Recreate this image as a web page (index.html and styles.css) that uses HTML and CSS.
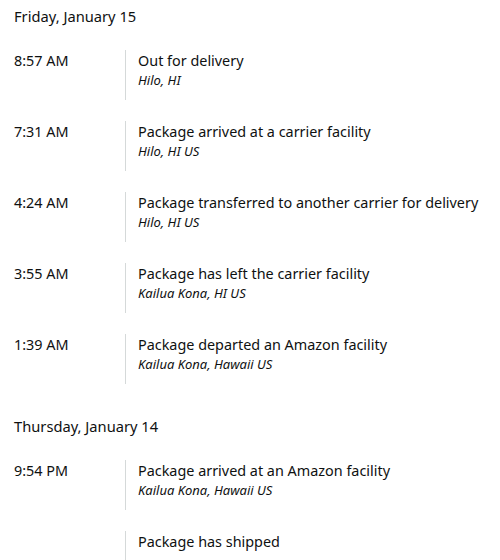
FILE: index.html
```html
<!DOCTYPE html>
<html lang="en">
<head>
    <meta charset="UTF-8">
    <title>Tracking</title>
    <link rel="stylesheet" href="styles.css">
</head>
<body>

<div class="tracking">
    <div class="day">
        <h3 class="day-title">Friday, January 15</h3>

        <div class="event">
            <div class="time">8:57 AM</div>
            <div class="details">
                <div class="status">Out for delivery</div>
                <div class="place">Hilo, HI</div>
            </div>
        </div>

        <div class="event">
            <div class="time">7:31 AM</div>
            <div class="details">
                <div class="status">Package arrived at a carrier facility</div>
                <div class="place">Hilo, HI US</div>
            </div>
        </div>

        <div class="event">
            <div class="time">4:24 AM</div>
            <div class="details">
                <div class="status">Package transferred to another carrier for delivery</div>
                <div class="place">Hilo, HI US</div>
            </div>
        </div>

        <div class="event">
            <div class="time">3:55 AM</div>
            <div class="details">
                <div class="status">Package has left the carrier facility</div>
                <div class="place">Kailua Kona, HI US</div>
            </div>
        </div>

        <div class="event">
            <div class="time">1:39 AM</div>
            <div class="details">
                <div class="status">Package departed an Amazon facility</div>
                <div class="place">Kailua Kona, Hawaii US</div>
            </div>
        </div>
    </div>

    <div class="day">
        <h3 class="day-title">Thursday, January 14</h3>

        <div class="event">
            <div class="time">9:54 PM</div>
            <div class="details">
                <div class="status">Package arrived at an Amazon facility</div>
                <div class="place">Kailua Kona, Hawaii US</div>
            </div>
        </div>

        <div class="event">
            <div class="time"></div>
            <div class="details">
                <div class="status">Package has shipped</div>
            </div>
        </div>
    </div>
</div>

</body>
</html>
```

FILE: styles.css
```css
body {
    margin: 0;
    background-color: #fff;
    font-family: "Noto Sans", "Open Sans", sans-serif;
    color: #0f1111;
}
.tracking {
    padding: 6px 14px 0 14px;
}
.day + .day {
    padding-top: 11px;
}
.day-title {
    margin: 0 0 24px 0;
    font-size: 14.7px;
    font-weight: normal;
    line-height: 20px;
}
.event {
    display: flex;
    margin-bottom: 21px;
}
.time {
    width: 111px;
    padding-top: 1px;
    font-size: 14.4px;
    line-height: 20px;
}
.details {
    box-sizing: border-box;
    height: 50px;
    padding: 1px 0 0 12px;
    border-left: 1px solid #d5d9d9;
}
.status {
    font-size: 14.4px;
    line-height: 20px;
}
.place {
    font-size: 13px;
    font-style: italic;
    line-height: 18px;
}
```
